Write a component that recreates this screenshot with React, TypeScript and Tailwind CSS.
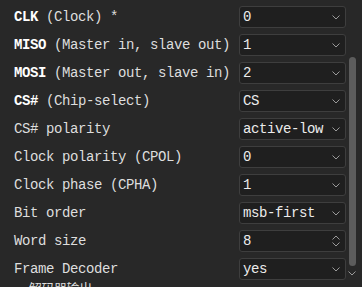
import { ReactNode } from 'react'

type Row = {
  bold?: string
  label: string
  value: string
  spin?: boolean
}

const rows: Row[] = [
  { bold: 'CLK', label: ' (Clock) *', value: '0' },
  { bold: 'MISO', label: ' (Master in, slave out)', value: '1' },
  { bold: 'MOSI', label: ' (Master out, slave in)', value: '2' },
  { bold: 'CS#', label: ' (Chip-select)', value: 'CS' },
  { label: 'CS# polarity', value: 'active-low' },
  { label: 'Clock polarity (CPOL)', value: '0' },
  { label: 'Clock phase (CPHA)', value: '1' },
  { label: 'Bit order', value: 'msb-first' },
  { label: 'Word size', value: '8', spin: true },
  { label: 'Frame Decoder', value: 'yes' },
]

function Chevron({ up = false }: { up?: boolean }) {
  return (
    <svg width="8" height="5" viewBox="0 0 8 5" className={up ? 'rotate-180' : ''}>
      <path d="M0.5 0.5 L4 4 L7.5 0.5" fill="none" stroke="#9a9a9a" strokeWidth="1" />
    </svg>
  )
}

function Field({ value, spin }: { value: string; spin?: boolean }): ReactNode {
  return (
    <div className="flex h-[22px] w-[107px] items-center justify-between rounded-[3px] border border-[#3e3e3e] bg-[#1f1f1f] pl-[3px] pr-[5px] text-[#ececec]">
      <span>{value}</span>
      {spin ? (
        <div className="flex flex-col gap-[2px]">
          <Chevron up />
          <Chevron />
        </div>
      ) : (
        <Chevron />
      )}
    </div>
  )
}

export default function App() {
  return (
    <div
      className="flex h-[287px] w-[362px] overflow-hidden bg-[#282828] text-[14px] tracking-[-0.4px] text-[#dedede]"
      style={{ fontFamily: '"Liberation Mono", "Noto Sans CJK SC", monospace' }}
    >
      <div className="flex w-[346px] flex-col gap-[6px] pt-[6px] pl-[14px]">
        {rows.map((row) => (
          <div key={row.label} className="flex h-[22px] items-center justify-between">
            <span className="whitespace-pre">
              {row.bold && <b className="font-bold text-white">{row.bold}</b>}
              {row.label}
            </span>
            <Field value={row.value} spin={row.spin} />
          </div>
        ))}
        <div className="-mt-[4px] text-[13px] leading-[16px]">· 解码器输出</div>
      </div>
      <div className="flex w-[16px] flex-col items-center pt-[57px] pr-[4px]">
        <div className="h-[209px] w-[7px] rounded-full bg-[#5c5c5c]" />
        <div className="mt-[5px]">
          <Chevron />
        </div>
      </div>
    </div>
  )
}
